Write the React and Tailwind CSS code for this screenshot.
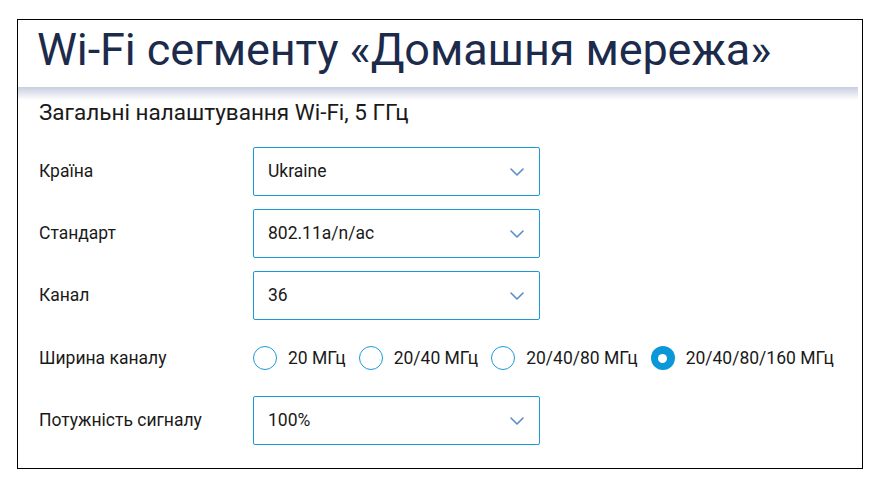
import React, { useState } from 'react';

const Chevron = () => (
    <svg width="14" height="8" viewBox="0 0 14 8" fill="none" className="shrink-0">
        <path d="M1 1l6 6 6-6" stroke="#5b8dc8" strokeWidth="1.6" strokeLinecap="round" strokeLinejoin="round" />
    </svg>
);

const Select = ({ value }) => (
    <div className="w-[287px] h-[49px] border border-[#1b9ad8] rounded-[2px] flex items-center justify-between pl-[14px] pr-[15px] text-[17.5px] text-[#1a1a1a]">
        <span>{value}</span>
        <Chevron />
    </div>
);

const Row = ({ label, children, tall }) => (
    <div className={`flex items-center ${tall ? 'h-[50px]' : 'h-[49px]'}`}>
        <div className="w-[214px] shrink-0 text-[17.5px] text-[#1a1a1a]">{label}</div>
        {children}
    </div>
);

const widths = ['20 МГц', '20/40 МГц', '20/40/80 МГц', '20/40/80/160 МГц'];

export default function App() {
    const [width, setWidth] = useState(3);

    return (
        <div className="w-full h-[489px] bg-white pt-[19px] pl-[17px]" style={{ fontFamily: 'Roboto, "Noto Sans", sans-serif' }}>
            <div className="w-[846px] h-[450px] border border-black flex flex-col">
                <div className="h-[67px] pt-[7px] pl-[19px]">
                    <h1 className="text-[45px] leading-[45px] text-[#1c2b4b] tracking-[-0.1px]">Wi-Fi сегменту «Домашня мережа»</h1>
                </div>
                <div className="h-[13px] mr-[4px] bg-gradient-to-b from-[#c8cee0] to-white" />
                <div className="pl-[21px]">
                    <h2 className="text-[22.5px] leading-[24px] text-[#1a1a1a]">Загальні налаштування Wi-Fi, 5 ГГц</h2>
                    <div className="mt-[23px] flex flex-col gap-[13px]">
                        <Row label="Країна"><Select value="Ukraine" /></Row>
                        <Row label="Стандарт"><Select value="802.11a/n/ac" /></Row>
                        <Row label="Канал"><Select value="36" /></Row>
                        <Row label="Ширина каналу" tall>
                            <div className="flex items-center">
                                {widths.map((w, i) => (
                                    <label key={w} className="flex items-center cursor-pointer mr-[13px]" onClick={() => setWidth(i)}>
                                        {width === i ? (
                                            <span className="w-[24px] h-[24px] rounded-full bg-[#0a98d8] flex items-center justify-center">
                                                <span className="w-[9px] h-[9px] rounded-full bg-white" />
                                            </span>
                                        ) : (
                                            <span className="w-[24px] h-[24px] rounded-full border-[1.5px] border-[#1b9ad8]" />
                                        )}
                                        <span className="ml-[11px] text-[17.5px] text-[#1a1a1a]">{w}</span>
                                    </label>
                                ))}
                            </div>
                        </Row>
                        <Row label="Потужність сигналу"><Select value="100%" /></Row>
                    </div>
                </div>
            </div>
        </div>
    );
}
